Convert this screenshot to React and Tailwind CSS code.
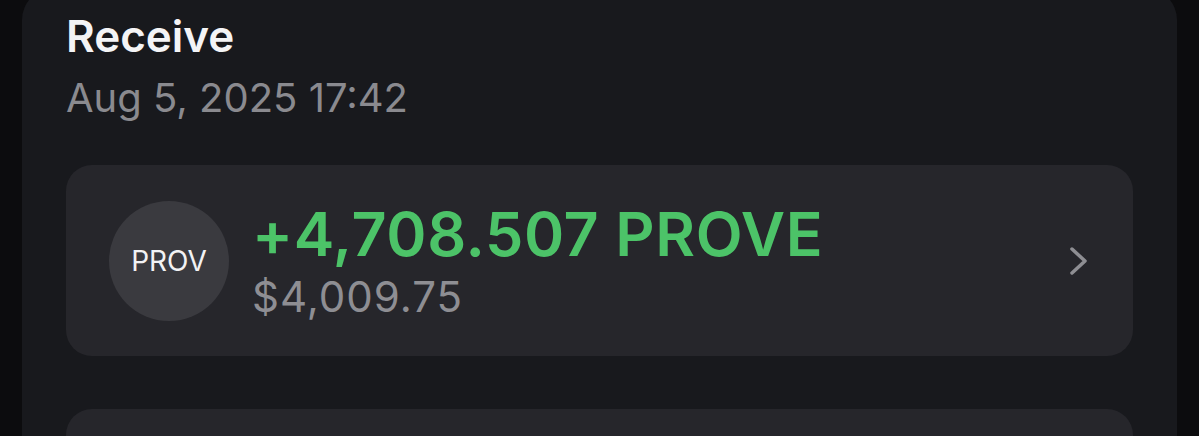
export default function App() {
  return (
    <div
      className="h-[436px] overflow-hidden bg-[#0c0c0e] px-[22px]"
      style={{ fontFamily: "Inter, 'Noto Sans', sans-serif" }}
    >
      <div className="-mt-[12px] rounded-t-[32px] bg-[#18191d] px-[44px] pt-[26px] pb-[40px]">
        <h1 className="text-[44px] leading-[44px] font-semibold text-[#f4f4f6]">Receive</h1>
        <p className="mt-[20px] text-[40px] leading-[40px] text-[#8a8a8f]">Aug 5, 2025 17:42</p>

        <div className="mt-[47px] flex h-[191px] items-center rounded-[26px] bg-[#26262b] pr-[46px] pl-[43px]">
          <div className="flex h-[120px] w-[120px] shrink-0 items-center justify-center rounded-full bg-[#3a3a3f]">
            <span className="text-[28px] leading-none text-[#f2f2f4]">PROV</span>
          </div>
          <div className="ml-[23px] flex flex-1 flex-col">
            <span className="text-[61px] leading-[60px] font-semibold tracking-[0.6px] text-[#4cc368]">
              +4,708.507 PROVE
            </span>
            <span className="mt-[12px] text-[42px] leading-[41px] tracking-[1px] text-[#8e8e93]">$4,009.75</span>
          </div>
          <svg width="17" height="28" viewBox="0 0 17 28" fill="none" className="shrink-0">
            <path d="M2 2 L15 14 L2 26" stroke="#8e8e93" strokeWidth="3.5" strokeLinecap="round" strokeLinejoin="round" />
          </svg>
        </div>

        <div className="mt-[53px] h-[191px] rounded-[26px] bg-[#26262b]" />
      </div>
    </div>
  );
}
